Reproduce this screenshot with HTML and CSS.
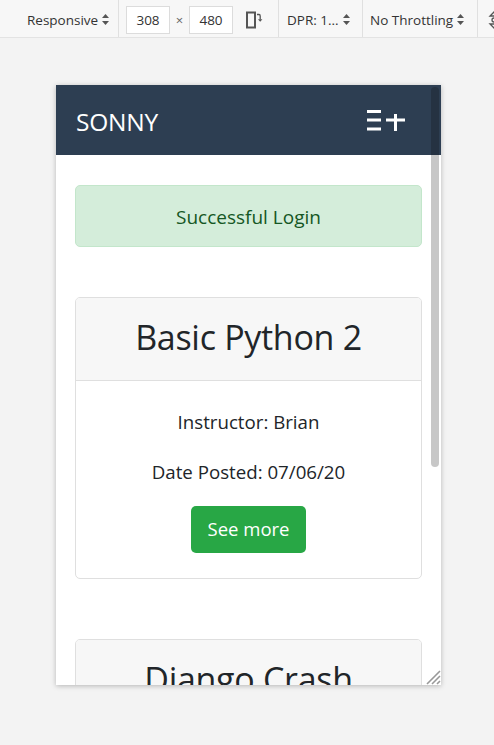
FILE: index.html
```html
<!DOCTYPE html>
<html lang="en">
<head>
<meta charset="utf-8">
<title>Responsive preview</title>
<link rel="stylesheet" href="styles.css">
</head>
<body>
<header class="toolbar">
  <div class="tb-group tb-device">
    <span class="tb-label">Responsive</span>
    <svg class="updown" viewBox="0 0 7 11" width="7" height="11"><path d="M3.5 0 L7 4 L0 4 Z M0 7 L7 7 L3.5 11 Z" fill="#555"/></svg>
  </div>
  <div class="tb-group tb-dims">
    <span class="dim-box">308</span>
    <span class="times">×</span>
    <span class="dim-box">480</span>
    <svg class="rotate" viewBox="0 0 18 18" width="18" height="18">
      <rect x="1" y="1.5" width="8" height="15" fill="none" stroke="#555" stroke-width="2"/>
      <path d="M11 3.5 H13 Q14.2 3.5 14.2 5 V8.5" fill="none" stroke="#555" stroke-width="1.3"/>
      <path d="M12 8.2 L14.2 10.8 L16.4 8.2 Z" fill="#555"/>
    </svg>
  </div>
  <div class="tb-group tb-dpr">
    <span class="tb-label">DPR: 1...</span>
    <svg class="updown" viewBox="0 0 7 11" width="7" height="11"><path d="M3.5 0 L7 4 L0 4 Z M0 7 L7 7 L3.5 11 Z" fill="#555"/></svg>
  </div>
  <div class="tb-group tb-throttle">
    <span class="tb-label">No Throttling</span>
    <svg class="updown" viewBox="0 0 7 11" width="7" height="11"><path d="M3.5 0 L7 4 L0 4 Z M0 7 L7 7 L3.5 11 Z" fill="#555"/></svg>
  </div>
  <div class="tb-group tb-more">
    <svg viewBox="0 0 12 20" width="12" height="20"><path d="M6 2 L10 6 L2 6 Z M2 14 L10 14 L6 18 Z" fill="none" stroke="#555" stroke-width="1.3"/><circle cx="6" cy="10" r="2" fill="none" stroke="#555" stroke-width="1.3"/></svg>
  </div>
</header>

<main class="stage">
  <div class="device">
    <div class="viewport">
      <nav class="navbar">
        <span class="brand">SONNY</span>
        <svg class="toggler" viewBox="0 0 40 22" width="40" height="22">
          <rect x="1" y="0" width="14" height="3" fill="#fff"/>
          <rect x="1" y="8.5" width="14" height="3" fill="#fff"/>
          <rect x="1" y="17.5" width="14" height="3" fill="#fff"/>
          <rect x="20" y="8.5" width="19" height="3" fill="#fff"/>
          <rect x="28" y="4" width="3" height="17" fill="#fff"/>
        </svg>
      </nav>
      <div class="container">
        <div class="alert">Successful Login</div>

        <div class="card">
          <div class="card-header"><h2 class="card-title">Basic Python 2</h2></div>
          <div class="card-body">
            <p>Instructor: Brian</p>
            <p class="last">Date Posted: 07/06/20</p>
            <a class="btn" href="#">See more</a>
          </div>
        </div>

        <div class="card card-peek">
          <div class="card-header"><h2 class="card-title">Django Crash</h2></div>
        </div>
      </div>
    </div>
    <div class="scrollbar"></div>
    <svg class="resize" viewBox="0 0 18 18" width="18" height="18">
      <path d="M17 4 L4 17 M17 9 L9 17 M17 14 L14 17" stroke="#999" stroke-width="1.6"/>
    </svg>
  </div>
</main>
</body>
</html>
```

FILE: styles.css
```css
* { box-sizing: border-box; }

html, body {
  margin: 0;
  padding: 0;
}

body {
  background: #f3f3f3;
  font-family: "Open Sans", "Noto Sans", sans-serif;
  width: 494px;
  height: 745px;
  overflow: hidden;
}

/* ---------- devtools toolbar ---------- */
.toolbar {
  display: flex;
  height: 38px;
  background: #f7f7f7;
  border-bottom: 1px solid #e3e3e3;
  color: #333;
  font-size: 13.5px;
  overflow: hidden;
}

.tb-group {
  display: flex;
  align-items: center;
  flex-shrink: 0;
  border-right: 1px solid #e0e0e0;
  height: 37px;
  padding-top: 2px;
}

.tb-device { width: 119px; padding-left: 27px; }
.tb-dims { width: 160px; padding-left: 7px; padding-top: 3px; }
.tb-dpr { width: 84px; padding-left: 8px; }
.tb-throttle { width: 115px; padding-left: 7px; }
.tb-more { border-right: none; padding-left: 10px; }

.updown { margin-left: 4px; }

.dim-box {
  width: 44px;
  height: 28px;
  background: #fff;
  border: 1px solid #dcdcdc;
  display: flex;
  align-items: center;
  justify-content: center;
}

.times {
  width: 19px;
  text-align: center;
  color: #666;
  font-size: 13px;
}

.rotate { margin-left: 13px; }

/* ---------- stage / device frame ---------- */
.stage {
  padding: 47px 0 0 56px;
}

.device {
  position: relative;
  width: 385px;
  height: 600px;
  background: #fff;
  box-shadow: 0 1px 5px rgba(0, 0, 0, 0.25);
}

.viewport {
  height: 600px;
  overflow: hidden;
  color: #212529;
}

.scrollbar {
  position: absolute;
  top: 2px;
  left: 375px;
  width: 8px;
  height: 380px;
  border-radius: 4px;
  background: rgba(15, 15, 15, 0.23);
}

.resize {
  position: absolute;
  right: 0;
  bottom: 0;
}

/* ---------- page inside device ---------- */
.navbar {
  height: 70px;
  background: #2d3e52;
  display: flex;
  align-items: center;
  justify-content: space-between;
  padding: 0 35px 0 20px;
}

.brand {
  color: #fff;
  font-size: 24.5px;
  letter-spacing: -0.2px;
  margin-top: 2px;
}

.toggler { margin-top: 2px; }

.container {
  display: flex;
  flex-direction: column;
  padding: 30px 19px 0 19px;
}

.alert {
  height: 62px;
  padding-top: 2px;
  background: #d4edda;
  border: 1px solid #c3e6cb;
  border-radius: 5px;
  color: #155724;
  font-size: 19px;
  display: flex;
  align-items: center;
  justify-content: center;
  margin-bottom: 20px;
}

.card {
  margin: 30px 0;
  border: 1px solid #dfdfdf;
  border-radius: 5px;
  overflow: hidden;
  text-align: center;
}

.card-header {
  background: #f7f7f7;
  border-bottom: 1px solid #dfdfdf;
  height: 83px;
  display: flex;
  align-items: center;
  justify-content: center;
}

.card-title {
  margin: 0 0 5px 0;
  font-weight: 400;
  font-size: 34px;
  letter-spacing: -0.3px;
  line-height: 1;
}

.card-body {
  padding: 26px 25px 25px;
}

.card-body p {
  margin: 0 0 20px 0;
  font-size: 18.7px;
  line-height: 30px;
}

.card-body p.last {
  margin-bottom: 19px;
}

.btn {
  display: inline-block;
  background: #28a745;
  color: #fff;
  text-decoration: none;
  font-size: 18.5px;
  line-height: 30px;
  width: 115px;
  padding: 8px 0 9px;
  border-radius: 5px;
}
```
